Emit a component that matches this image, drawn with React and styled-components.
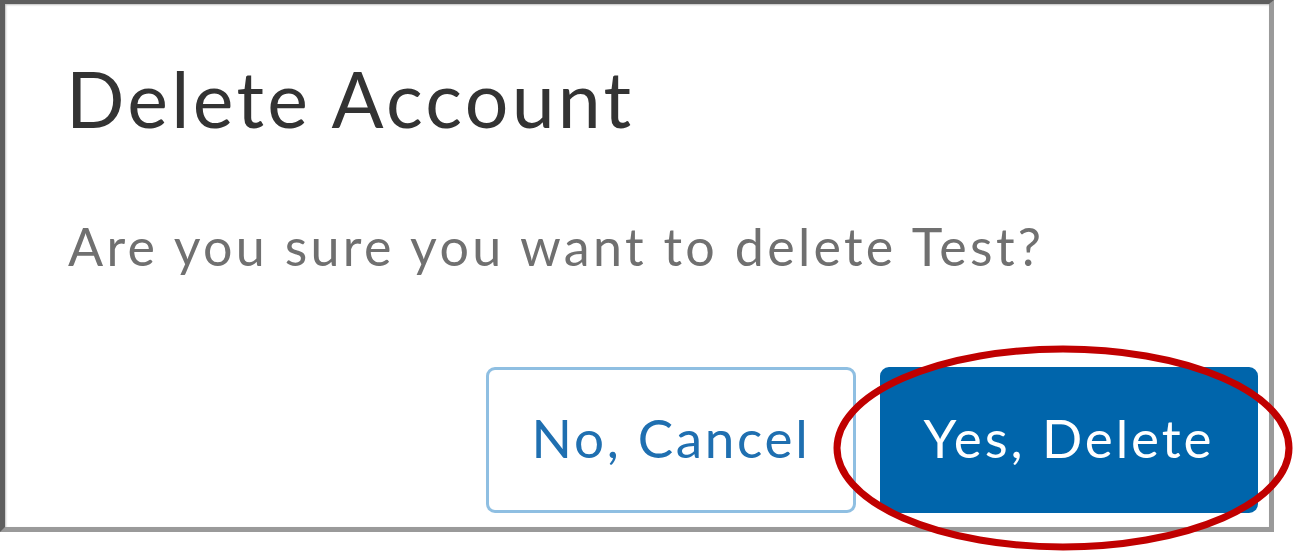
import React from "react";
import styled, { createGlobalStyle } from "styled-components";

const Global = createGlobalStyle`
  html, body { margin: 0; padding: 0; background: #ffffff; }
  body { font-family: "Lato", "Noto Sans", sans-serif; }
`;

const Page = styled.div`
  position: relative;
  width: 1293px;
  height: 554px;
  overflow: hidden;
`;

const Frame = styled.div`
  box-sizing: border-box;
  width: 1274px;
  height: 532px;
  border-style: solid;
  border-width: 4px 5px 5px 5px;
  border-color: #5e5e5e #9a9a9a #9a9a9a #5e5e5e;
  box-shadow: inset 1px 1px 2px rgba(0, 0, 0, 0.25);
  background: #ffffff;
  padding: 0 11px 0 63px;
  display: flex;
  flex-direction: column;
`;

const Title = styled.h1`
  margin: 48px 0 0 -2px;
  font-family: "Lato", sans-serif;
  font-weight: 400;
  font-size: 77px;
  line-height: 92px;
  color: #333333;
  letter-spacing: 3.3px;
`;

const Message = styled.p`
  margin: 71px 0 0 0;
  font-family: "Lato", sans-serif;
  font-weight: 400;
  font-size: 52px;
  line-height: 62px;
  color: #707070;
  letter-spacing: 3.3px;
`;

const Actions = styled.div`
  display: flex;
  justify-content: flex-end;
  gap: 24px;
  margin-top: 90px;
`;

const Button = styled.button`
  box-sizing: border-box;
  height: 146px;
  width: ${(p) => p.$w}px;
  border-radius: 9px;
  font-family: "Lato", sans-serif;
  font-weight: 400;
  font-size: 53px;
  letter-spacing: ${(p) => (p.$primary ? 2.9 : 2.7)}px;
  display: flex;
  align-items: center;
  justify-content: center;
  padding: 0 0 6px 0;
  cursor: pointer;
  border: 3px solid ${(p) => (p.$primary ? "#0065ab" : "#8fbfe2")};
  background: ${(p) => (p.$primary ? "#0065ab" : "#ffffff")};
  color: ${(p) => (p.$primary ? "#ffffff" : "#1f6fb0")};
`;

const Highlight = styled.svg`
  position: absolute;
  left: 832px;
  top: 344px;
  width: 463px;
  height: 210px;
  pointer-events: none;
`;

export default function App() {
  return (
    <Page>
      <Global />
      <Frame>
        <Title>Delete Account</Title>
        <Message>Are you sure you want to delete Test?</Message>
        <Actions>
          <Button $w={370}>No, Cancel</Button>
          <Button $w={378} $primary>Yes, Delete</Button>
        </Actions>
      </Frame>
      <Highlight viewBox="0 0 463 210">
        <ellipse cx="231" cy="104" rx="226" ry="99" fill="none" stroke="#c00000" strokeWidth="7" />
      </Highlight>
    </Page>
  );
}
